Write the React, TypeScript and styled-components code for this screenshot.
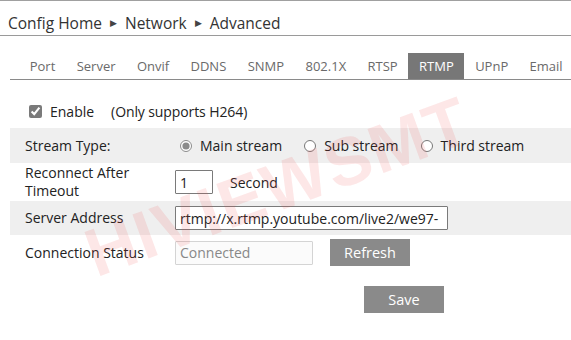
import React, { useState } from 'react';
import styled, { createGlobalStyle } from 'styled-components';

const GlobalStyle = createGlobalStyle`
  body {
    margin: 0;
    background: #fff;
    font-family: "Open Sans", "Noto Sans", sans-serif;
    color: #222;
  }
`;

const Page = styled.div`
  position: relative;
  width: 571px;
  height: 340px;
  overflow: hidden;
  border-top: 1px solid #a0a0a0;
  box-sizing: border-box;
`;

const Breadcrumb = styled.div`
  height: 35px;
  box-sizing: border-box;
  padding: 9px 0 0 8px;
  display: flex;
  align-items: center;
  gap: 8px;
  border-bottom: 1px solid #9a9a9a;
  font-size: 15.5px;
  color: #333;
`;

const Arrow = styled.span`
  font-size: 9px;
  color: #444;
`;

const TabBar = styled.div`
  display: flex;
  margin: 17px 0 0 10px;
  padding-left: 9px;
  height: 26px;
  border-bottom: 1px solid #8a8a8a;
`;

const Tab = styled.div<{ $active?: boolean }>`
  display: flex;
  align-items: center;
  padding: 0 10.7px;
  font-size: 13px;
  color: ${({ $active }) => ($active ? '#fff' : '#6a6a6a')};
  background: ${({ $active }) => ($active ? '#777' : 'transparent')};
`;

const EnableRow = styled.label`
  display: flex;
  align-items: center;
  height: 22px;
  margin: 20px 0 6px 28px;
  font-size: 14px;
  color: #222;
`;

const Check = styled.input`
  width: 13px;
  height: 13px;
  margin: 0 8px 0 1px;
  accent-color: #7a7a7a;
`;

const Note = styled.span`
  margin-left: 17px;
  letter-spacing: -0.1px;
`;

const Form = styled.div`
  margin-left: 10px;
  display: flex;
  flex-direction: column;
`;

const Row = styled.div<{ $shade?: boolean; $h: number }>`
  display: flex;
  align-items: center;
  height: ${({ $h }) => $h}px;
  background: ${({ $shade }) => ($shade ? '#efefef' : 'transparent')};
  font-size: 14px;
  color: #222;
`;

const Label = styled.div`
  width: 150px;
  padding-left: 15px;
  line-height: 18px;
`;

const Value = styled.div`
  display: flex;
  align-items: center;
`;

const RadioItem = styled.label`
  display: flex;
  align-items: center;
  margin-right: 17px;
`;

const Radio = styled.input`
  width: 12px;
  height: 12px;
  margin: 0 8px 0 5px;
  accent-color: #8a8a8a;
`;

const TextBox = styled.input<{ $w: number; $muted?: boolean }>`
  box-sizing: border-box;
  width: ${({ $w }) => $w}px;
  height: 24px;
  padding: 0 4px;
  font-family: inherit;
  font-size: 14px;
  color: ${({ $muted }) => ($muted ? '#888' : '#222')};
  background: ${({ $muted }) => ($muted ? '#fbfbfb' : '#fff')};
  border: 1px solid ${({ $muted }) => ($muted ? '#d4d4d4' : '#7a7a7a')};
  border-radius: 1px;
  outline: none;
`;

const Unit = styled.span`
  margin-left: 17px;
`;

const GrayButton = styled.button<{ $ml?: number }>`
  width: 80px;
  height: 27px;
  margin-left: ${({ $ml }) => $ml ?? 0}px;
  border: none;
  background: #8a8a8a;
  color: #fff;
  font-family: inherit;
  font-size: 14.5px;
  cursor: pointer;
`;

const Footer = styled.div`
  display: flex;
  padding-left: 364px;
  margin-top: 16px;
`;

const Watermark = styled.div`
  position: absolute;
  left: 88px;
  top: 220px;
  line-height: 1;
  transform: rotate(-20deg);
  transform-origin: left center;
  font-family: "Liberation Sans", sans-serif;
  font-weight: bold;
  font-size: 68px;
  letter-spacing: 2px;
  color: rgba(238, 70, 70, 0.13);
  pointer-events: none;
  white-space: nowrap;
`;

const tabs = ['Port', 'Server', 'Onvif', 'DDNS', 'SNMP', '802.1X', 'RTSP', 'RTMP', 'UPnP', 'Email'];

export default function App() {
  const [stream, setStream] = useState('main');
  const [enabled, setEnabled] = useState(true);

  return (
    <Page>
      <GlobalStyle />
      <Breadcrumb>
        <span>Config Home</span>
        <Arrow>▶</Arrow>
        <span>Network</span>
        <Arrow>▶</Arrow>
        <span>Advanced</span>
      </Breadcrumb>

      <TabBar>
        {tabs.map((t) => (
          <Tab key={t} $active={t === 'RTMP'}>{t}</Tab>
        ))}
      </TabBar>

      <EnableRow>
        <Check type="checkbox" checked={enabled} onChange={(e) => setEnabled(e.target.checked)} />
        Enable
        <Note>(Only supports H264)</Note>
      </EnableRow>

      <Form>
        <Row $shade $h={35}>
          <Label>Stream Type:</Label>
          <Value>
            <RadioItem>
              <Radio type="radio" name="stream" checked={stream === 'main'} onChange={() => setStream('main')} />
              Main stream
            </RadioItem>
            <RadioItem>
              <Radio type="radio" name="stream" checked={stream === 'sub'} onChange={() => setStream('sub')} />
              Sub stream
            </RadioItem>
            <RadioItem>
              <Radio type="radio" name="stream" checked={stream === 'third'} onChange={() => setStream('third')} />
              Third stream
            </RadioItem>
          </Value>
        </Row>
        <Row $h={38}>
          <Label>Reconnect After Timeout</Label>
          <Value>
            <TextBox $w={38} defaultValue="1" />
            <Unit>Second</Unit>
          </Value>
        </Row>
        <Row $shade $h={34}>
          <Label>Server Address</Label>
          <Value>
            <TextBox $w={273} defaultValue="rtmp://x.rtmp.youtube.com/live2/we97-" />
          </Value>
        </Row>
        <Row $h={35}>
          <Label>Connection Status</Label>
          <Value>
            <TextBox $w={138} $muted disabled value="Connected" />
            <GrayButton $ml={17}>Refresh</GrayButton>
          </Value>
        </Row>
      </Form>

      <Footer>
        <GrayButton>Save</GrayButton>
      </Footer>

      <Watermark>HIVIEWSMT</Watermark>
    </Page>
  );
}
